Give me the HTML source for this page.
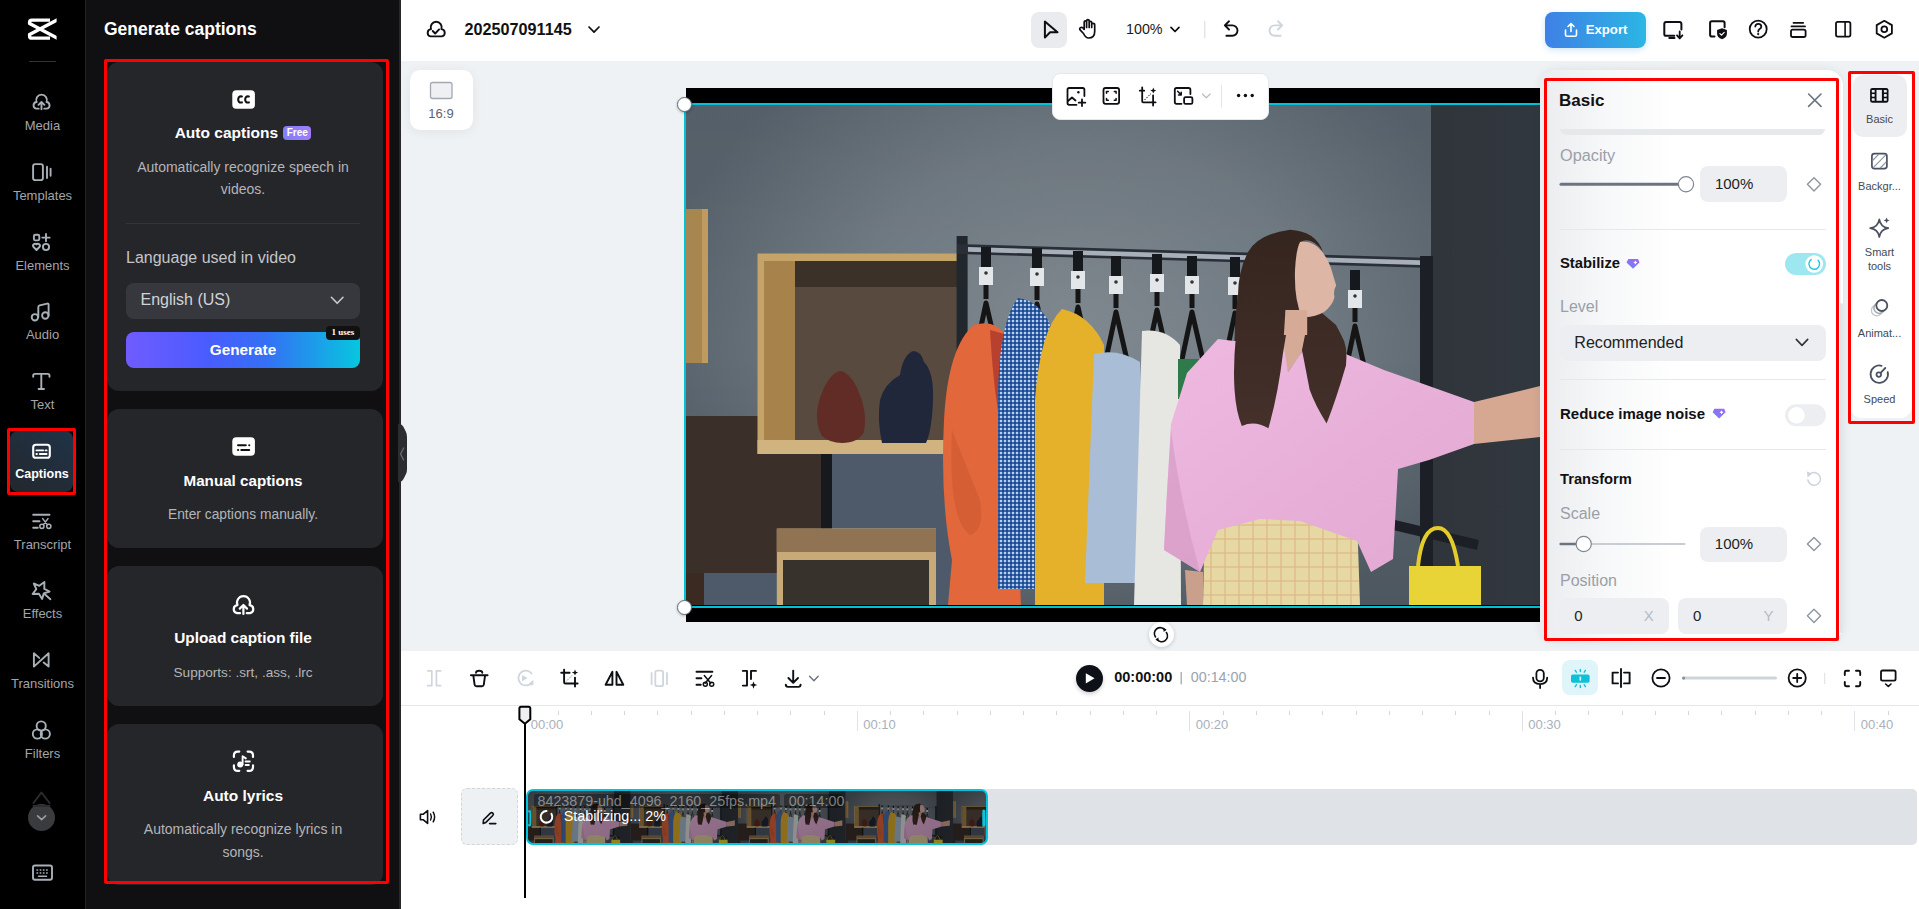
<!DOCTYPE html>
<html><head><meta charset="utf-8"><style>
*{margin:0;padding:0;box-sizing:border-box}
html,body{width:1919px;height:909px;overflow:hidden;background:#fff;font-family:"Liberation Sans", sans-serif}
.t{position:absolute;line-height:1;white-space:nowrap}
svg{display:block}
</style></head><body>
<div style="position:absolute;left:0px;top:0px;width:85px;height:909px;background:#000"></div><div style="position:absolute;left:85px;top:0px;width:1px;height:909px;background:#242424"></div><svg style="position:absolute;left:0;top:0" width="85" height="60" viewBox="0 0 85 60" fill="none"><path d="M50 20.1 H31.8 Q29.6 20.1 29.6 22.3 V23.6 L58 38.6 M50 38.1 H31.8 Q29.6 38.1 29.6 35.9 V34.6 L58 19.6" stroke="#fff" stroke-width="3.4" stroke-linejoin="round"/><rect x="56.6" y="14" width="6" height="30" fill="#000"/></svg><div style="position:absolute;left:29px;top:61px;width:27px;height:1px;background:#333"></div><div class="t" style="left:-257.5px;width:600px;text-align:center;top:119.00px;font-size:13px;color:#a3a5aa;font-weight:400;">Media</div><div class="t" style="left:-257.5px;width:600px;text-align:center;top:189.00px;font-size:13px;color:#a3a5aa;font-weight:400;">Templates</div><div class="t" style="left:-257.5px;width:600px;text-align:center;top:259.00px;font-size:13px;color:#a3a5aa;font-weight:400;">Elements</div><div class="t" style="left:-257.5px;width:600px;text-align:center;top:328.00px;font-size:13px;color:#a3a5aa;font-weight:400;">Audio</div><div class="t" style="left:-257.5px;width:600px;text-align:center;top:398.00px;font-size:13px;color:#a3a5aa;font-weight:400;">Text</div><div class="t" style="left:-257.5px;width:600px;text-align:center;top:538.00px;font-size:13px;color:#a3a5aa;font-weight:400;">Transcript</div><div class="t" style="left:-257.5px;width:600px;text-align:center;top:607.00px;font-size:13px;color:#a3a5aa;font-weight:400;">Effects</div><div class="t" style="left:-257.5px;width:600px;text-align:center;top:677.00px;font-size:13px;color:#a3a5aa;font-weight:400;">Transitions</div><div class="t" style="left:-257.5px;width:600px;text-align:center;top:747.00px;font-size:13px;color:#a3a5aa;font-weight:400;">Filters</div><div style="position:absolute;left:10px;top:431px;width:63px;height:61px;border-radius:8px;background:linear-gradient(35deg,#24272c 0%,#1f3348 100%)"></div><div class="t" style="left:-258px;width:600px;text-align:center;top:468.42px;font-size:12.5px;color:#fff;font-weight:700;">Captions</div><div style="position:absolute;left:7px;top:428px;width:69px;height:67px;border:3px solid #f00;border-radius:2px"></div><div style="position:absolute;left:28px;top:804px;width:27px;height:27px;border-radius:50%;background:#3a3b3e"></div><div style="position:absolute;left:86px;top:0px;width:315px;height:909px;background:#101012"></div><div style="position:absolute;left:399px;top:0px;width:2px;height:909px;background:#28282a"></div><div class="t" style="left:104px;top:21.19px;font-size:17.5px;color:#fff;font-weight:700;">Generate captions</div><div style="position:absolute;left:107px;top:62px;width:276px;height:329px;background:#25262a;border-radius:12px"></div><div style="position:absolute;left:107px;top:409px;width:276px;height:139px;background:#25262a;border-radius:12px"></div><div style="position:absolute;left:107px;top:566px;width:276px;height:140px;background:#25262a;border-radius:12px"></div><div style="position:absolute;left:107px;top:724px;width:276px;height:161px;background:#25262a;border-radius:12px"></div><div class="t" style="left:-57px;width:600px;text-align:center;top:124.88px;font-size:15.5px;color:#fff;font-weight:700;">Auto captions <span style="display:inline-block;vertical-align:2px;margin-left:1px;width:28px;height:14px;text-align:center;background:linear-gradient(60deg,#7d7ff6,#a47cf8);color:#fff;font-size:10px;font-weight:700;border-radius:4px;line-height:14px">Free</span></div><div class="t" style="left:-57px;width:600px;text-align:center;top:160.15px;font-size:14px;color:#b4b5b9;font-weight:400;">Automatically recognize speech in</div><div class="t" style="left:-57px;width:600px;text-align:center;top:182.15px;font-size:14px;color:#b4b5b9;font-weight:400;">videos.</div><div style="position:absolute;left:126px;top:223px;width:234px;height:1px;background:#34353a"></div><div class="t" style="left:126px;top:249.96px;font-size:16px;color:#c4c5c9;font-weight:400;">Language used in video</div><div style="position:absolute;left:126px;top:283px;width:234px;height:36px;background:#37383d;border-radius:8px"></div><div class="t" style="left:140.5px;top:292.46px;font-size:16px;color:#d2d3d7;font-weight:400;">English (US)</div><div style="position:absolute;left:126px;top:332px;width:234px;height:36px;border-radius:8px;background:linear-gradient(90deg,#6f5cff 0%,#4a5cff 35%,#3470f5 60%,#07c6df 100%)"></div><div class="t" style="left:-57px;width:600px;text-align:center;top:341.55px;font-size:15.3px;color:#fff;font-weight:700;">Generate</div><div style="position:absolute;left:326px;top:326px;width:34px;height:14px;background:#111;border-radius:4px"></div><div class="t" style="left:43px;width:600px;text-align:center;top:328.38px;font-size:9px;color:#fff;font-weight:700;font-family:'Liberation Serif',serif;">1 uses</div><div class="t" style="left:-57px;width:600px;text-align:center;top:473.43px;font-size:15.2px;color:#fff;font-weight:700;">Manual captions</div><div class="t" style="left:-57px;width:600px;text-align:center;top:507.72px;font-size:13.8px;color:#b4b5b9;font-weight:400;">Enter captions manually.</div><div class="t" style="left:-57px;width:600px;text-align:center;top:630.16px;font-size:15.4px;color:#fff;font-weight:700;">Upload caption file</div><div class="t" style="left:-57px;width:600px;text-align:center;top:665.79px;font-size:13.6px;color:#b4b5b9;font-weight:400;">Supports: .srt, .ass, .lrc</div><div class="t" style="left:-57px;width:600px;text-align:center;top:787.68px;font-size:15.5px;color:#fff;font-weight:700;">Auto lyrics</div><div class="t" style="left:-57px;width:600px;text-align:center;top:822.15px;font-size:14px;color:#b4b5b9;font-weight:400;">Automatically recognize lyrics in</div><div class="t" style="left:-57px;width:600px;text-align:center;top:844.85px;font-size:14px;color:#b4b5b9;font-weight:400;">songs.</div><div style="position:absolute;left:104px;top:59px;width:285px;height:825px;border:3px solid #f00;border-radius:2px"></div><div style="position:absolute;left:401px;top:0px;width:1518px;height:61px;background:#fff"></div><div class="t" style="left:464.5px;top:21.39px;font-size:16.2px;color:#111;font-weight:700;">202507091145</div><div class="t" style="left:1126px;top:21.70px;font-size:14.3px;color:#1a1a1a;font-weight:400;">100%</div><div style="position:absolute;left:1031px;top:12px;width:36px;height:36px;background:#e9ebee;border-radius:8px"></div><div style="position:absolute;left:1545px;top:12px;width:101px;height:36px;border-radius:8px;background:linear-gradient(90deg,#3f80e6,#2bb6e4);box-shadow:0 2px 6px rgba(60,160,230,.25)"></div><div class="t" style="left:1585.7px;top:22.83px;font-size:13.2px;color:#fff;font-weight:700;">Export</div><div style="position:absolute;left:401px;top:61px;width:1518px;height:590px;background:#eef2f5"></div><div style="position:absolute;left:410px;top:70px;width:63px;height:60px;background:#fff;border-radius:10px;box-shadow:0 2px 12px rgba(0,0,0,.06)"></div><div class="t" style="left:141px;width:600px;text-align:center;top:106.80px;font-size:13px;color:#5c6370;font-weight:400;">16:9</div><div style="position:absolute;left:686px;top:88px;width:880px;height:534px;background:#000"></div><svg style="position:absolute;left:686px;top:105px" width="880" height="500" viewBox="686 105 880 500"><g id="photoG"><defs>
<radialGradient id="wall" gradientUnits="userSpaceOnUse" cx="1080" cy="330" r="420" gradientTransform="translate(1080 330) scale(1 0.8) translate(-1080 -330)"><stop offset="0" stop-color="#808990"/><stop offset="0.55" stop-color="#717b83"/><stop offset="1" stop-color="#58636d"/></radialGradient>
<linearGradient id="wallv" x1="0" y1="0" x2="0" y2="1"><stop offset="0" stop-color="#000" stop-opacity="0.04"/><stop offset="0.5" stop-color="#000" stop-opacity="0"/><stop offset="1" stop-color="#000" stop-opacity="0.12"/></linearGradient>
<linearGradient id="darkwall" x1="0" y1="0" x2="1" y2="0"><stop offset="0" stop-color="#2f353b"/><stop offset="1" stop-color="#32383f"/></linearGradient>
<linearGradient id="pink" x1="0" y1="0" x2="1" y2="1"><stop offset="0" stop-color="#eeb9e0"/><stop offset="1" stop-color="#e2a8d2"/></linearGradient>
<linearGradient id="hair" gradientUnits="userSpaceOnUse" x1="0" y1="230" x2="0" y2="430"><stop offset="0" stop-color="#35251f"/><stop offset="1" stop-color="#45302a"/></linearGradient>
<pattern id="check" width="4" height="4" patternUnits="userSpaceOnUse"><rect width="4" height="4" fill="#3565ad"/><rect width="2" height="2" fill="#b9cfeb"/><rect x="2" y="2" width="2" height="2" fill="#1f4a8e"/></pattern>
<pattern id="plaid" width="14" height="14" patternUnits="userSpaceOnUse"><rect width="14" height="14" fill="#e6d8a2"/><rect x="6" width="2" height="14" fill="#e0b888" opacity=".6"/><rect y="6" width="14" height="2" fill="#e0b888" opacity=".6"/></pattern>
</defs><rect x="686" y="105" width="880" height="500" fill="url(#wall)"/><rect x="1431" y="105" width="140" height="500" fill="url(#darkwall)"/><rect x="686" y="105" width="745" height="500" fill="url(#wallv)"/><rect x="686" y="440" width="270" height="165" fill="#4e5a6a"/><rect x="686" y="209" width="22" height="154" fill="#a8864f"/><rect x="702" y="209" width="6" height="154" fill="#c09a5e"/><rect x="686" y="416" width="135" height="157" fill="#3b2f2a"/><rect x="686" y="573" width="18" height="32" fill="#3a2a22"/><rect x="757.5" y="253.5" width="200.5" height="200.5" fill="#c4a468"/><rect x="764" y="261" width="194" height="181" fill="#584a3e"/><rect x="764" y="261" width="194" height="26" fill="#342a23" opacity=".8"/><rect x="764" y="261" width="31" height="181" fill="#a7824a"/><rect x="757.5" y="440" width="200.5" height="14" fill="#d0b37e"/><path d="M840 371 Q828 374 820 398 Q813 420 822 436 Q830 443 842 443 Q858 443 864 432 Q868 412 858 390 Q850 372 840 371 Z" fill="#612c26"/><path d="M913 351 Q921 351 924 362 Q934 372 933 400 Q932 430 926 443 H882 Q877 420 880 400 Q884 384 900 375 Q903 355 913 351 Z" fill="#20273a"/><rect x="821" y="454" width="11" height="76" fill="#16191d"/><rect x="776.8" y="528.5" width="159.2" height="76.5" fill="#c7aa78"/><rect x="776.8" y="529" width="159.2" height="23" fill="#8f7352"/><rect x="783" y="560" width="146" height="45" fill="#38322d"/><rect x="956.6" y="236" width="11" height="369" fill="#22262d"/><path d="M957 244 L1433 258 L1433 268 L957 254 Z" fill="#2a2f37"/><path d="M968 247 L1420 260.3 L1420 265 L968 251.7 Z" fill="#a7b0ba"/><rect x="1420" y="256" width="13" height="349" fill="#1c2026"/><path d="M1395 520 L1479 540 L1477 550 L1393 530 Z" fill="#1c2026"/><rect x="981" y="247" width="10" height="21" fill="#15181d"/><rect x="979" y="267" width="14" height="18" fill="#e4e7ea"/><circle cx="986" cy="273" r="1.8" fill="#333"/><path d="M986 285 V299 M975 355 L986 303 L997 351" stroke="#151515" stroke-width="5" fill="none" stroke-linejoin="round"/><rect x="1032" y="248" width="10" height="21" fill="#15181d"/><rect x="1030" y="268" width="14" height="18" fill="#e4e7ea"/><circle cx="1037" cy="274" r="1.8" fill="#333"/><path d="M1037 286 V300 M1026 356 L1037 304 L1048 352" stroke="#151515" stroke-width="5" fill="none" stroke-linejoin="round"/><rect x="1073" y="251" width="10" height="21" fill="#15181d"/><rect x="1071" y="271" width="14" height="18" fill="#e4e7ea"/><circle cx="1078" cy="277" r="1.8" fill="#333"/><path d="M1078 289 V303 M1067 359 L1078 307 L1089 355" stroke="#151515" stroke-width="5" fill="none" stroke-linejoin="round"/><rect x="1111" y="256" width="10" height="21" fill="#15181d"/><rect x="1109" y="276" width="14" height="18" fill="#e4e7ea"/><circle cx="1116" cy="282" r="1.8" fill="#333"/><path d="M1116 294 V308 M1105 364 L1116 312 L1127 360" stroke="#151515" stroke-width="5" fill="none" stroke-linejoin="round"/><rect x="1152" y="254" width="10" height="21" fill="#15181d"/><rect x="1150" y="274" width="14" height="18" fill="#e4e7ea"/><circle cx="1157" cy="280" r="1.8" fill="#333"/><path d="M1157 292 V306 M1146 362 L1157 310 L1168 358" stroke="#151515" stroke-width="5" fill="none" stroke-linejoin="round"/><rect x="1187" y="256" width="10" height="21" fill="#15181d"/><rect x="1185" y="276" width="14" height="18" fill="#e4e7ea"/><circle cx="1192" cy="282" r="1.8" fill="#333"/><path d="M1192 294 V308 M1181 364 L1192 312 L1203 360" stroke="#151515" stroke-width="5" fill="none" stroke-linejoin="round"/><rect x="1230" y="257" width="10" height="21" fill="#15181d"/><rect x="1228" y="277" width="14" height="18" fill="#e4e7ea"/><circle cx="1235" cy="283" r="1.8" fill="#333"/><path d="M1235 295 V309 M1224 365 L1235 313 L1246 361" stroke="#151515" stroke-width="5" fill="none" stroke-linejoin="round"/><rect x="1350" y="270" width="10" height="21" fill="#15181d"/><rect x="1348" y="290" width="14" height="18" fill="#e4e7ea"/><circle cx="1355" cy="296" r="1.8" fill="#333"/><path d="M1355 308 V322 M1344 378 L1355 326 L1366 374" stroke="#151515" stroke-width="5" fill="none" stroke-linejoin="round"/><path d="M975 324 Q948 345 944 420 Q940 500 952 560 L948 605 H1021 L1010 340 Q995 318 975 325 Z" fill="#e2673a"/><path d="M952 430 Q948 520 970 535 Q985 530 980 500 Z" fill="#c9552e" opacity=".5"/><path d="M990 330 L1008 335 L1010 460 Q995 420 990 330 Z" fill="#b8402e"/><path d="M1018 298 Q1000 320 998 390 V589 H1052 L1053 330 Q1040 300 1018 298 Z" fill="url(#check)"/><path d="M1062 309 Q1040 330 1035 400 V605 H1104 L1104 345 Q1090 315 1062 309 Z" fill="#e5b12a"/><path d="M1094 354 L1085 583 H1148 L1140 362 Q1118 348 1094 354 Z" fill="#a9bed6"/><path d="M1142 331 L1134 605 H1181 L1180 345 Q1165 328 1142 331 Z" fill="#e6e6e3"/><rect x="1178" y="359" width="36" height="40" fill="#2f7a4a"/><path d="M1290 229.7 Q1258 234 1248 252 Q1238 272 1238 295 Q1233 330 1234.5 389.5 Q1236 412 1241.8 425.9 L1268.4 428.3 Q1278 395 1283 353 L1300 330 L1309.6 389.5 Q1318 410 1326.6 423.4 Q1340 395 1346 365.3 Q1348 345 1336 325 L1322 313 L1302 310 L1300 242 Q1312 236 1323 252 Q1316 231 1290 229.7 Z" fill="url(#hair)"/><path d="M1300 242 Q1313 240 1322 251.5 Q1330 262 1333 275 L1336.2 285.4 Q1333 290 1334.5 297.5 Q1332 306 1324 312 Q1314 318 1302 317 Q1294 300 1295 270 Q1296 250 1300 242 Z" fill="#ddb6a6"/><path d="M1285.4 310 H1307.2 L1307.2 340 L1300 355.6 L1287.8 372 L1283 350 Z" fill="#d5ab98"/><path d="M1205 516 L1357 516 L1360 605 H1203 Z" fill="url(#plaid)"/><path d="M1218 339 L1234 341 L1283 342 L1288 372 L1302 352 L1320 340 L1348 355 L1384 370 L1474 402 L1474 444 L1429 460 L1398 469 L1393 559 L1371 572 L1357 541 L1300 521 L1260 519 L1218 530 L1200 572 L1164 550 L1167 492 L1171 424 L1187 373 Z" fill="url(#pink)"/><path d="M1171 430 Q1180 500 1200 572 L1164 550 L1167 492 Z" fill="#d69bc4" opacity=".7"/><path d="M1236 335 Q1233 365 1234.5 389.5 Q1236 412 1241.8 425.9 Q1255 420 1268.4 428.3 Q1278 395 1283 353 L1286 335 Z" fill="url(#hair)"/><path d="M1341 335 Q1348 345 1346 365.3 Q1336 400 1326.6 423.4 Q1315 405 1309.6 389.5 L1302 350 L1305 335 Z" fill="url(#hair)"/><path d="M1474 402 L1540 386 L1540 437 L1474 444 Z" fill="#d6a892"/><path d="M1185 570 L1203 572 L1203 605 H1187 Z" fill="#c9a08c"/><path d="M1418 566 Q1422 528 1438 528 Q1452 528 1458 566" stroke="#e3cc2c" stroke-width="4" fill="none"/><path d="M1409 566 H1481 V605 H1409 Z" fill="#e8d436"/></g></svg><div style="position:absolute;left:684px;top:103px;width:880px;height:505px;border:2px solid #00c2d6"></div><div style="position:absolute;left:1052px;top:73px;width:217px;height:47px;background:#fff;border-radius:8px;border:1px solid #e4e7eb"></div><div style="position:absolute;left:1148.5px;top:622.2px;width:25px;height:25px;border-radius:50%;background:#fff;box-shadow:0 1px 4px rgba(0,0,0,.18)"></div><div style="position:absolute;left:1540px;top:70px;width:303px;height:572px;background:linear-gradient(90deg,#eaecef 0%,#f7f8f9 22%,#fff 45%);border-radius:16px;box-shadow:0 0 10px rgba(0,0,0,.08)"></div><div style="position:absolute;left:1560px;top:129px;width:265px;height:6px;background:#e6e9ec;border-radius:0 0 8px 8px"></div><div style="position:absolute;left:1840px;top:303px;width:3px;height:330px;background:#e3e6e9;border-radius:2px"></div><div class="t" style="left:1559px;top:91.61px;font-size:17px;color:#111;font-weight:700;">Basic</div><div class="t" style="left:1560px;top:146.70px;font-size:16.3px;color:#9aa0a8;font-weight:400;">Opacity</div><div style="position:absolute;left:1700px;top:166px;width:87px;height:36px;background:#eceef1;border-radius:8px"></div><div class="t" style="left:1714.9px;top:176.10px;font-size:15px;color:#222;font-weight:400;">100%</div><div style="position:absolute;left:1560px;top:229px;width:266px;height:1px;background:#e6e8eb"></div><div class="t" style="left:1560px;top:255.87px;font-size:14.8px;color:#111;font-weight:700;">Stabilize</div><div class="t" style="left:1560px;top:298.86px;font-size:16px;color:#9aa0a8;font-weight:400;">Level</div><div style="position:absolute;left:1560px;top:325px;width:266px;height:36px;background:#eceef1;border-radius:8px"></div><div class="t" style="left:1574.3px;top:334.37px;font-size:16.1px;color:#222;font-weight:400;">Recommended</div><div style="position:absolute;left:1560px;top:379px;width:266px;height:1px;background:#e6e8eb"></div><div class="t" style="left:1560px;top:406.00px;font-size:15px;color:#111;font-weight:700;">Reduce image noise</div><div style="position:absolute;left:1560px;top:449px;width:266px;height:1px;background:#e6e8eb"></div><div class="t" style="left:1560px;top:472.06px;font-size:14.7px;color:#111;font-weight:700;">Transform</div><div class="t" style="left:1560px;top:506.46px;font-size:16px;color:#9aa0a8;font-weight:400;">Scale</div><div style="position:absolute;left:1700px;top:527px;width:87px;height:35px;background:#eceef1;border-radius:8px"></div><div class="t" style="left:1714.8px;top:536.20px;font-size:15px;color:#222;font-weight:400;">100%</div><div class="t" style="left:1560px;top:573.36px;font-size:16px;color:#9aa0a8;font-weight:400;">Position</div><div style="position:absolute;left:1559px;top:598px;width:110px;height:36px;background:#eceef1;border-radius:8px"></div><div style="position:absolute;left:1678px;top:598px;width:109px;height:36px;background:#eceef1;border-radius:8px"></div><div class="t" style="left:1574.3px;top:608.30px;font-size:15px;color:#222;font-weight:400;">0</div><div class="t" style="left:1693px;top:608.30px;font-size:15px;color:#222;font-weight:400;">0</div><div class="t" style="left:1643.7px;top:608.30px;font-size:15px;color:#b6bcc4;font-weight:400;">X</div><div class="t" style="left:1763.5px;top:608.30px;font-size:15px;color:#b6bcc4;font-weight:400;">Y</div><div style="position:absolute;left:1544px;top:78px;width:295px;height:563px;border:3px solid #f00;border-radius:2px"></div><div style="position:absolute;left:1850px;top:71px;width:62px;height:347px;background:#fff;border-radius:12px"></div><div style="position:absolute;left:1853px;top:75px;width:54px;height:62px;background:#eceef1;border-radius:10px"></div><div class="t" style="left:1579.5px;width:600px;text-align:center;top:114.09px;font-size:11px;color:#444a52;font-weight:400;">Basic</div><div class="t" style="left:1579.5px;width:600px;text-align:center;top:181.29px;font-size:11px;color:#444a52;font-weight:400;">Backgr...</div><div class="t" style="left:1579.5px;width:600px;text-align:center;top:246.69px;font-size:11px;color:#444a52;font-weight:400;">Smart</div><div class="t" style="left:1579.5px;width:600px;text-align:center;top:260.99px;font-size:11px;color:#444a52;font-weight:400;">tools</div><div class="t" style="left:1579.5px;width:600px;text-align:center;top:327.69px;font-size:11px;color:#444a52;font-weight:400;">Animat...</div><div class="t" style="left:1579.5px;width:600px;text-align:center;top:394.09px;font-size:11px;color:#444a52;font-weight:400;">Speed</div><div style="position:absolute;left:1848px;top:71px;width:67px;height:353px;border:3px solid #f00;border-radius:2px"></div><div style="position:absolute;left:401px;top:651px;width:1518px;height:54px;background:#fff"></div><div style="position:absolute;left:401px;top:705px;width:1518px;height:1px;background:#e5e8eb"></div><div style="position:absolute;left:1076px;top:665px;width:27px;height:27px;background:#0d1117;border-radius:50%;box-shadow:0 2px 4px rgba(0,0,0,.2)"></div><div class="t" style="left:1114.2px;top:670.03px;font-size:14.5px;color:#111;font-weight:700;">00:00:00</div><div class="t" style="left:1190.8px;top:670.20px;font-size:14.3px;color:#9aa3ad;font-weight:400;">00:14:00</div><div style="position:absolute;left:1562px;top:660px;width:36px;height:35px;background:#dff5f9;border-radius:8px"></div><div style="position:absolute;left:558px;top:711px;width:1px;height:4px;background:#d3d7dc"></div><div style="position:absolute;left:591px;top:711px;width:1px;height:4px;background:#d3d7dc"></div><div style="position:absolute;left:624px;top:711px;width:1px;height:4px;background:#d3d7dc"></div><div style="position:absolute;left:657px;top:711px;width:1px;height:4px;background:#d3d7dc"></div><div style="position:absolute;left:691px;top:711px;width:1px;height:4px;background:#d3d7dc"></div><div style="position:absolute;left:724px;top:711px;width:1px;height:4px;background:#d3d7dc"></div><div style="position:absolute;left:757px;top:711px;width:1px;height:4px;background:#d3d7dc"></div><div style="position:absolute;left:790px;top:711px;width:1px;height:4px;background:#d3d7dc"></div><div style="position:absolute;left:824px;top:711px;width:1px;height:4px;background:#d3d7dc"></div><div style="position:absolute;left:890px;top:711px;width:1px;height:4px;background:#d3d7dc"></div><div style="position:absolute;left:923px;top:711px;width:1px;height:4px;background:#d3d7dc"></div><div style="position:absolute;left:957px;top:711px;width:1px;height:4px;background:#d3d7dc"></div><div style="position:absolute;left:990px;top:711px;width:1px;height:4px;background:#d3d7dc"></div><div style="position:absolute;left:1023px;top:711px;width:1px;height:4px;background:#d3d7dc"></div><div style="position:absolute;left:1056px;top:711px;width:1px;height:4px;background:#d3d7dc"></div><div style="position:absolute;left:1090px;top:711px;width:1px;height:4px;background:#d3d7dc"></div><div style="position:absolute;left:1123px;top:711px;width:1px;height:4px;background:#d3d7dc"></div><div style="position:absolute;left:1156px;top:711px;width:1px;height:4px;background:#d3d7dc"></div><div style="position:absolute;left:1223px;top:711px;width:1px;height:4px;background:#d3d7dc"></div><div style="position:absolute;left:1256px;top:711px;width:1px;height:4px;background:#d3d7dc"></div><div style="position:absolute;left:1289px;top:711px;width:1px;height:4px;background:#d3d7dc"></div><div style="position:absolute;left:1322px;top:711px;width:1px;height:4px;background:#d3d7dc"></div><div style="position:absolute;left:1356px;top:711px;width:1px;height:4px;background:#d3d7dc"></div><div style="position:absolute;left:1389px;top:711px;width:1px;height:4px;background:#d3d7dc"></div><div style="position:absolute;left:1422px;top:711px;width:1px;height:4px;background:#d3d7dc"></div><div style="position:absolute;left:1455px;top:711px;width:1px;height:4px;background:#d3d7dc"></div><div style="position:absolute;left:1489px;top:711px;width:1px;height:4px;background:#d3d7dc"></div><div style="position:absolute;left:1555px;top:711px;width:1px;height:4px;background:#d3d7dc"></div><div style="position:absolute;left:1588px;top:711px;width:1px;height:4px;background:#d3d7dc"></div><div style="position:absolute;left:1622px;top:711px;width:1px;height:4px;background:#d3d7dc"></div><div style="position:absolute;left:1655px;top:711px;width:1px;height:4px;background:#d3d7dc"></div><div style="position:absolute;left:1688px;top:711px;width:1px;height:4px;background:#d3d7dc"></div><div style="position:absolute;left:1721px;top:711px;width:1px;height:4px;background:#d3d7dc"></div><div style="position:absolute;left:1755px;top:711px;width:1px;height:4px;background:#d3d7dc"></div><div style="position:absolute;left:1788px;top:711px;width:1px;height:4px;background:#d3d7dc"></div><div style="position:absolute;left:1821px;top:711px;width:1px;height:4px;background:#d3d7dc"></div><div style="position:absolute;left:1888px;top:711px;width:1px;height:4px;background:#d3d7dc"></div><div class="t" style="left:530.8px;top:717.70px;font-size:13px;color:#a9b0ba;font-weight:400;">00:00</div><div style="position:absolute;left:524px;top:711px;width:1px;height:20px;background:#dfe2e6"></div><div class="t" style="left:863.3px;top:717.70px;font-size:13px;color:#a9b0ba;font-weight:400;">00:10</div><div style="position:absolute;left:857px;top:711px;width:1px;height:20px;background:#dfe2e6"></div><div class="t" style="left:1195.8px;top:717.70px;font-size:13px;color:#a9b0ba;font-weight:400;">00:20</div><div style="position:absolute;left:1189px;top:711px;width:1px;height:20px;background:#dfe2e6"></div><div class="t" style="left:1528.3px;top:717.70px;font-size:13px;color:#a9b0ba;font-weight:400;">00:30</div><div style="position:absolute;left:1522px;top:711px;width:1px;height:20px;background:#dfe2e6"></div><div class="t" style="left:1860.8px;top:717.70px;font-size:13px;color:#a9b0ba;font-weight:400;">00:40</div><div style="position:absolute;left:1854px;top:711px;width:1px;height:20px;background:#dfe2e6"></div><div style="position:absolute;left:960px;top:789px;width:957px;height:56px;background:#dfe2e6;border-radius:0 5px 5px 0"></div><svg style="position:absolute;left:527px;top:790px" width="460" height="54" viewBox="0 0 460 54"><defs><clipPath id="clipc"><rect width="460" height="54" rx="6"/></clipPath></defs><g clip-path="url(#clipc)"><g transform="translate(-4.0,0) scale(0.1222,0.108)"><use href="#photoG" transform="translate(-686,-105)"/></g><g transform="translate(103.5,0) scale(0.1222,0.108)"><use href="#photoG" transform="translate(-686,-105)"/></g><g transform="translate(211.0,0) scale(0.1222,0.108)"><use href="#photoG" transform="translate(-686,-105)"/></g><g transform="translate(318.5,0) scale(0.1222,0.108)"><use href="#photoG" transform="translate(-686,-105)"/></g><g transform="translate(426.0,0) scale(0.1222,0.108)"><use href="#photoG" transform="translate(-686,-105)"/></g><rect width="460" height="54" fill="#000" opacity=".38"/></g></svg><div style="position:absolute;left:526px;top:789px;width:462px;height:56px;border:2px solid #00c4dc;border-radius:7px"></div><div style="position:absolute;left:534px;top:794px;width:246px;height:14px;background:rgba(0,0,0,.35);border-radius:3px"></div><div style="position:absolute;left:784px;top:794px;width:58px;height:14px;background:rgba(0,0,0,.35);border-radius:3px"></div><div class="t" style="left:537.5px;top:793.60px;font-size:14.3px;color:rgba(255,255,255,.45);font-weight:400;">8423879-uhd_4096_2160_25fps.mp4</div><div class="t" style="left:788.7px;top:793.60px;font-size:14.3px;color:rgba(255,255,255,.45);font-weight:400;">00:14:00</div><div class="t" style="left:563.7px;top:808.91px;font-size:14.4px;color:#fff;font-weight:400;">Stabilizing... 2%</div><div style="position:absolute;left:461px;top:788px;width:57px;height:57px;background:#eef1f4;border:1px dashed #d2d6dc;border-radius:6px"></div><div style="position:absolute;left:524px;top:724px;width:2px;height:174px;background:#000"></div><svg style="position:absolute;left:395px;top:420px" width="16" height="66" viewBox="395 420 16 66"><path d="M398 424 H399.5 Q402 424 404 428 L406 432 Q407 434 407 437 V469 Q407 472 406 474 L404 478 Q402 482 399.5 482 H398 Z" fill="#2c2d30"/><path d="M403.6 448 L400.6 454 L403.6 460" stroke="#6a6b6e" stroke-width="1.3" fill="none" stroke-linecap="round"/></svg><svg style="position:absolute;left:0;top:0;pointer-events:none" width="1919" height="909" viewBox="0 0 1919 909" fill="none"><defs><linearGradient id="gemg" x1="1" y1="0" x2="0.3" y2="1"><stop offset="0" stop-color="#a464f7"/><stop offset="1" stop-color="#6f82f8"/></linearGradient></defs><g transform="translate(31.55,93.3) scale(0.82)"><path d="M8.7 18.7 H5.7 A4.1 4.1 0 0 1 6.2 10.6 A6.5 6.5 0 1 1 18.2 10.6 A4.1 4.1 0 0 1 18.7 18.7 H15.5" stroke="#a8b0b8" stroke-width="2.317073170731707" stroke-linecap="round" stroke-linejoin="round" fill="none"/><path d="M12.1 19.5 V10.5 M8.5 14.1 L12.1 10.5 L15.7 14.1" stroke="#a8b0b8" stroke-width="2.317073170731707" stroke-linecap="round" stroke-linejoin="round" fill="none"/></g><rect x="33.1" y="164.1" width="9.8" height="16" rx="2.2" stroke="#a8b0b8" stroke-width="1.9" stroke-linecap="round" stroke-linejoin="round" fill="none"/><path d="M47 166.8 L47 178 M50.6 168.7 V175.8" stroke="#a8b0b8" stroke-width="1.9" stroke-linecap="round" stroke-linejoin="round" fill="none"/><rect x="33.9" y="234.8" width="5.4" height="5.6" rx="1.5" stroke="#a8b0b8" stroke-width="1.9" stroke-linecap="round" stroke-linejoin="round" fill="none"/><path d="M42.3 237.6 H49.7 M46 233.9 V241.3" stroke="#a8b0b8" stroke-width="1.9" stroke-linecap="round" stroke-linejoin="round" fill="none"/><path d="M36.5 250 L33.6 247 A1.9 1.9 0 0 1 36.5 244.4 A1.9 1.9 0 0 1 39.4 247 Z" stroke="#a8b0b8" stroke-width="1.9" stroke-linecap="round" stroke-linejoin="round" fill="none"/><circle cx="46" cy="247" r="3.1" stroke="#a8b0b8" stroke-width="1.9" stroke-linecap="round" stroke-linejoin="round" fill="none"/><circle cx="34.9" cy="317.3" r="3.2" stroke="#a8b0b8" stroke-width="1.9" stroke-linecap="round" stroke-linejoin="round" fill="none"/><circle cx="45.3" cy="315.5" r="3.2" stroke="#a8b0b8" stroke-width="1.9" stroke-linecap="round" stroke-linejoin="round" fill="none"/><path d="M38.3 317 V307.2 Q38.3 305.8 39.6 305.4 L47.3 303.6 Q48.6 303.4 48.6 304.8 V315.5" stroke="#a8b0b8" stroke-width="1.9" stroke-linecap="round" stroke-linejoin="round" fill="none"/><path d="M33.2 376.8 V375.5 Q33.2 373.9 35 373.9 H47.7 Q49.5 373.9 49.5 375.5 V376.8 M41.3 374 V389 M38.6 389 H44" stroke="#a8b0b8" stroke-width="1.9" stroke-linecap="round" stroke-linejoin="round" fill="none"/><rect x="33.2" y="444.8" width="16.6" height="13" rx="2.6" stroke="#fff" stroke-width="2.1" stroke-linecap="round" stroke-linejoin="round" fill="none"/><path d="M36.4 450.4 H43.3 M45.6 450.4 H46.6 M36.4 454 H37 M39.8 454 H46.6" stroke="#fff" stroke-width="1.8" stroke-linecap="round" stroke-linejoin="round" fill="none"/><path d="M33.2 514.7 H49.5 M33.2 521.2 H39.5 M33.2 527.8 H37.8" stroke="#a8b0b8" stroke-width="1.9" stroke-linecap="round" stroke-linejoin="round" fill="none"/><path d="M42.7 518.6 L47.3 524.6 M48 518.6 L43.4 524.6" stroke="#a8b0b8" stroke-width="1.5" stroke-linecap="round" stroke-linejoin="round" fill="none"/><circle cx="41.9" cy="526.3" r="2.1" stroke="#a8b0b8" stroke-width="1.5" stroke-linecap="round" stroke-linejoin="round" fill="none"/><circle cx="48.8" cy="526.3" r="2.1" stroke="#a8b0b8" stroke-width="1.5" stroke-linecap="round" stroke-linejoin="round" fill="none"/><path d="M33.8 583.5 L39.3 585.8 L44.4 581.9 L44.3 588.9 L49.6 591.5 L43.8 593.4 L42.1 599 L38.9 593.8 L32.6 594 L36.3 589.2 Z" stroke="#a8b0b8" stroke-width="1.9" stroke-linecap="round" stroke-linejoin="round" fill="none"/><path d="M44.2 593.7 L50.4 599.2" stroke="#a8b0b8" stroke-width="1.9" stroke-linecap="round" stroke-linejoin="round" fill="none"/><path d="M39.2 657.9 L33.9 653.3 V666.6 L48.6 653.3 V666.6 L43.7 662.6" stroke="#a8b0b8" stroke-width="1.9" stroke-linecap="round" stroke-linejoin="round" fill="none"/><circle cx="41.2" cy="726" r="4.6" stroke="#a8b0b8" stroke-width="1.9" stroke-linecap="round" stroke-linejoin="round" fill="none"/><circle cx="37.4" cy="734" r="4.6" stroke="#a8b0b8" stroke-width="1.9" stroke-linecap="round" stroke-linejoin="round" fill="none"/><circle cx="45.3" cy="734" r="4.6" stroke="#a8b0b8" stroke-width="1.9" stroke-linecap="round" stroke-linejoin="round" fill="none"/><path d="M33.5 803 L41.5 792.5 L49.5 803 M33.5 806 H49.5" stroke="#2c2d30" stroke-width="1.9" stroke-linecap="round" stroke-linejoin="round" fill="none"/><path d="M37.6 815.8 L41.6 819.6 L45.6 815.8" stroke="#9a9ca0" stroke-width="1.6" stroke-linecap="round" stroke-linejoin="round" fill="none"/><rect x="33" y="865.5" width="19" height="14.2" rx="2" stroke="#a8b0b8" stroke-width="1.9" stroke-linecap="round" stroke-linejoin="round" fill="none"/><path d="M37 870 H37.6 M40.2 870 H40.8 M43.4 870 H44 M46.6 870 H47.2 M37 873 H37.6 M40.2 873 H40.8 M43.4 873 H44 M46.6 873 H47.2 M38.5 876.3 H46.5" stroke="#a8b0b8" stroke-width="1.5" stroke-linecap="round" stroke-linejoin="round" fill="none"/><rect x="232.3" y="90.2" width="22.6" height="18.5" rx="4" fill="#fff"/><path d="M241.9 96.5 C239.3 95.8 238.2 97.6 238.2 99.45 C238.2 101.3 239.3 103.1 241.9 102.4 M248.9 96.5 C246.3 95.8 245.2 97.6 245.2 99.45 C245.2 101.3 246.3 103.1 248.9 102.4" stroke="#111" stroke-width="2.1" fill="none" stroke-linecap="round"/><rect x="232.3" y="437.2" width="22.6" height="18.5" rx="4" fill="#fff"/><path d="M238 445.2 H245.8 M249.2 445.2 H249.3 M238 449.9 H238.2 M241.3 449.9 H249.2" stroke="#111" stroke-width="2" stroke-linecap="round" fill="none"/><g transform="translate(231.3,594.5) scale(1.0)"><path d="M8.7 18.7 H5.7 A4.1 4.1 0 0 1 6.2 10.6 A6.5 6.5 0 1 1 18.2 10.6 A4.1 4.1 0 0 1 18.7 18.7 H15.5" stroke="#fff" stroke-width="2.2" stroke-linecap="round" stroke-linejoin="round" fill="none"/><path d="M12.1 19.5 V10.5 M8.5 14.1 L12.1 10.5 L15.7 14.1" stroke="#fff" stroke-width="2.2" stroke-linecap="round" stroke-linejoin="round" fill="none"/></g><path d="M233.9 757 V755.5 Q233.9 751.6 237.8 751.6 H239.3 M247.6 751.6 H249.1 Q253 751.6 253 755.5 V757 M253 765.4 V766.9 Q253 770.8 249.1 770.8 H247.6 M239.3 770.8 H237.8 Q233.9 770.8 233.9 766.9 V765.4" stroke="#fff" stroke-width="2.2" stroke-linecap="round" stroke-linejoin="round" fill="none"/><circle cx="240.2" cy="764.6" r="3" fill="#fff"/><path d="M242.6 764.6 V756.2 L245.8 758.4" stroke="#fff" stroke-width="1.9" stroke-linecap="round" stroke-linejoin="round" fill="none"/><path d="M245.6 761.5 H249.8 M245.6 765 H248.8" stroke="#fff" stroke-width="1.9" stroke-linecap="round" stroke-linejoin="round" fill="none"/><path d="M430.6 36.4 A3.7 3.7 0 0 1 431 29.1 A5.5 5.5 0 1 1 441.4 29.1 A3.7 3.7 0 0 1 441.8 36.4 Z" stroke="#0d0f14" stroke-width="1.9" stroke-linecap="round" stroke-linejoin="round" fill="none"/><path d="M432.7 31 L435.2 33.5 L439.1 29.4" stroke="#0d0f14" stroke-width="1.9" stroke-linecap="round" stroke-linejoin="round" fill="none"/><path d="M595.2 27.5 L593.5 29.2" stroke="none"/><path d="M589 27 L594 32.2 L599 27" stroke="#0d0f14" stroke-width="1.7" stroke-linecap="round" stroke-linejoin="round" fill="none"/><rect x="430.5" y="82.5" width="21.5" height="16" rx="2" fill="#eef0f3" stroke="#a3a9b2" stroke-width="1.3"/><path d="M1044.9 21.6 V37.6 L1050.1 32.3 H1057.5 Z" stroke="#0d0f14" stroke-width="2" stroke-linecap="round" stroke-linejoin="round" fill="none"/><path d="M1083.5 33.5 L1080.3 30.2 Q1079 28.6 1080.5 27.6 Q1081.8 26.8 1083 28 L1084.2 29.4 V22 Q1084.2 20.8 1085.4 20.8 Q1086.6 20.8 1086.6 22 V27.5 M1086.6 23.5 V20.9 Q1086.6 19.7 1087.9 19.7 Q1089.2 19.7 1089.2 20.9 V27.5 M1089.2 22.6 Q1089.2 21.4 1090.4 21.4 Q1091.7 21.4 1091.7 22.6 V27.5 M1091.7 24.6 Q1091.7 23.4 1093 23.4 Q1094.7 23.4 1094.7 25 V31.5 Q1094.7 38 1088.6 38 Q1085.6 38 1083.5 33.5" stroke="#0d0f14" stroke-width="1.7" stroke-linecap="round" stroke-linejoin="round" fill="none"/><path d="M1171 27.3 L1175 31.5 L1179 27.3" stroke="#0d0f14" stroke-width="1.7" stroke-linecap="round" stroke-linejoin="round" fill="none"/><rect x="1204.2" y="21" width="1.2" height="17.5" fill="#dde0e4"/><path d="M1229 21.3 L1224.8 25.4 L1229 29.5 M1225.2 25.4 H1232.3 A5.2 5.2 0 0 1 1232.3 35.8 H1226.4" stroke="#0d0f14" stroke-width="1.9" stroke-linecap="round" stroke-linejoin="round" fill="none"/><path d="M1278 21.3 L1282.2 25.4 L1278 29.5 M1281.8 25.4 H1274.7 A5.2 5.2 0 0 0 1274.7 35.8 H1280.6" stroke="#cfd5dd" stroke-width="1.9" stroke-linecap="round" stroke-linejoin="round" fill="none"/><path d="M1565.5 30 V34.8 Q1565.5 36.3 1567 36.3 H1575 Q1576.5 36.3 1576.5 34.8 V30 M1571 31.5 V23.6 M1568 26.5 L1571 23.5 L1574 26.5" stroke="#fff" stroke-width="1.6" stroke-linecap="round" stroke-linejoin="round" fill="none"/><path d="M1681.4 29.6 V24 Q1681.4 22.1 1679.5 22.1 H1666.2 Q1664.3 22.1 1664.3 24 V33.9 Q1664.3 35.8 1666.2 35.8 H1674.3 M1669.3 38 H1674.5" stroke="#0d0f14" stroke-width="2" stroke-linecap="round" stroke-linejoin="round" fill="none"/><path d="M1679.7 31.5 V38.4 M1677 35.3 L1679.7 38.3 L1682.4 35.3" stroke="#0d0f14" stroke-width="1.8" stroke-linecap="round" stroke-linejoin="round" fill="none"/><path d="M1724.6 27.3 V23 Q1724.6 21.2 1722.8 21.2 H1711.9 Q1710.1 21.2 1710.1 23 V34.7 Q1710.1 36.5 1711.9 36.5 H1714.5" stroke="#0d0f14" stroke-width="2" stroke-linecap="round" stroke-linejoin="round" fill="none"/><path d="M1722 28.3 L1726.9 30 V33.8 Q1726.9 37.4 1722 39.2 Q1717.1 37.4 1717.1 33.8 V30 Z" fill="#0d0f14"/><path d="M1719.9 33.6 L1721.5 35.2 L1724.2 32.4" stroke="#fff" stroke-width="1.2" fill="none" stroke-linecap="round" stroke-linejoin="round"/><circle cx="1758.2" cy="29.1" r="8.5" stroke="#0d0f14" stroke-width="1.8" stroke-linecap="round" stroke-linejoin="round" fill="none"/><path d="M1755.3 26.5 Q1755.5 23.8 1758.3 23.8 Q1761.3 23.8 1761.3 26.4 Q1761.3 28 1759.6 29 Q1758.2 29.9 1758.2 31.5" stroke="#0d0f14" stroke-width="1.8" stroke-linecap="round" stroke-linejoin="round" fill="none"/><circle cx="1758.2" cy="34.1" r="1.1" fill="#0d0f14"/><path d="M1793.5 22.8 H1803.2 M1791.5 26.4 H1805 " stroke="#0d0f14" stroke-width="1.8" stroke-linecap="round" stroke-linejoin="round" fill="none"/><rect x="1791" y="29.6" width="14.6" height="7.4" rx="1.8" stroke="#0d0f14" stroke-width="1.8" stroke-linecap="round" stroke-linejoin="round" fill="none"/><rect x="1836" y="21.8" width="14.4" height="14.8" rx="1.8" stroke="#0d0f14" stroke-width="1.8" stroke-linecap="round" stroke-linejoin="round" fill="none"/><path d="M1845.1 22 V36.4" stroke="#0d0f14" stroke-width="1.6" stroke-linecap="round" stroke-linejoin="round" fill="none"/><path d="M1884.3 20.8 L1891.9 25.1 V33.4 L1884.3 37.7 L1876.7 33.4 V25.1 Z" stroke="#0d0f14" stroke-width="1.8" stroke-linecap="round" stroke-linejoin="round" fill="none"/><circle cx="1884.3" cy="29.2" r="2.9" stroke="#0d0f14" stroke-width="1.8" stroke-linecap="round" stroke-linejoin="round" fill="none"/><path d="M1076.5 104.8 H1069.2 Q1067.5 104.8 1067.5 103.1 V89.7 Q1067.5 88 1069.2 88 H1082.7 Q1084.4 88 1084.4 89.7 V96" stroke="#0d0f14" stroke-width="1.8" stroke-linecap="round" stroke-linejoin="round" fill="none"/><path d="M1068 101 L1072 97.5 L1075.5 100.5" stroke="#0d0f14" stroke-width="1.8" stroke-linecap="round" stroke-linejoin="round" fill="none"/><circle cx="1078.4" cy="92.2" r="1.2" fill="#0d0f14"/><path d="M1082 99.4 V106 M1078.7 102.7 H1085.3" stroke="#0d0f14" stroke-width="1.8" stroke-linecap="round" stroke-linejoin="round" fill="none"/><rect x="1103.5" y="88" width="15.6" height="15.8" rx="2" stroke="#0d0f14" stroke-width="1.8" stroke-linecap="round" stroke-linejoin="round" fill="none"/><path d="M1106.5 93.3 V91.5 H1108.3 M1114.3 91.5 H1116.1 V93.3 M1116.1 98.5 V100.3 H1114.3 M1108.3 100.3 H1106.5 V98.5" stroke="#0d0f14" stroke-width="1.5" stroke-linecap="round" stroke-linejoin="round" fill="none"/><path d="M1139.8 90.7 H1144.2 M1142.2 87.5 V101.2 Q1142.2 102.3 1143.3 102.3 H1155.6 M1153.1 95.3 V105.6" stroke="#0d0f14" stroke-width="1.8" stroke-linecap="round" stroke-linejoin="round" fill="none"/><path d="M1144.5 100 L1151 93.5" stroke="#0d0f14" stroke-width="1" stroke-dasharray="1.5 1.2"/><path d="M1153.3 87.6 L1154.2 89.8 L1156.3 90.6 L1154.2 91.4 L1153.3 93.6 L1152.4 91.4 L1150.3 90.6 L1152.4 89.8 Z" fill="#0d0f14"/><path d="M1181.5 103.8 H1176.6 Q1174.8 103.8 1174.8 102 V89.7 Q1174.8 88 1176.6 88 H1188.6 Q1190.4 88 1190.4 89.7 V94" stroke="#0d0f14" stroke-width="1.8" stroke-linecap="round" stroke-linejoin="round" fill="none"/><path d="M1177.6 91.3 L1181.2 94.9 M1181.2 92.2 V94.9 H1178.5" stroke="#0d0f14" stroke-width="1.5" stroke-linecap="round" stroke-linejoin="round" fill="none"/><rect x="1184.1" y="97.2" width="8.3" height="6.7" rx="1.5" stroke="#0d0f14" stroke-width="1.8" stroke-linecap="round" stroke-linejoin="round" fill="none"/><path d="M1202.5 94 L1206.3 97.8 L1210.1 94" stroke="#b9bfc7" stroke-width="1.3" stroke-linecap="round" stroke-linejoin="round" fill="none"/><rect x="1221" y="85" width="1" height="22.5" fill="#e3e6ea"/><circle cx="1238.6" cy="95.5" r="1.7" fill="#0d0f14"/><circle cx="1245.4" cy="95.5" r="1.7" fill="#0d0f14"/><circle cx="1252.2" cy="95.5" r="1.7" fill="#0d0f14"/><path d="M1808.6 94 L1821 106.4 M1821 94 L1808.6 106.4" stroke="#6b7480" stroke-width="1.6" stroke-linecap="round" stroke-linejoin="round" fill="none"/><path d="M1814 177.70000000000002 L1820.6 184.3 L1814 190.9 L1807.4 184.3 Z" stroke="#8f969e" stroke-width="1.4" stroke-linecap="round" stroke-linejoin="round" fill="none"/><path d="M1814 537.4 L1820.6 544 L1814 550.6 L1807.4 544 Z" stroke="#8f969e" stroke-width="1.4" stroke-linecap="round" stroke-linejoin="round" fill="none"/><path d="M1814 609.1999999999999 L1820.6 615.8 L1814 622.4 L1807.4 615.8 Z" stroke="#8f969e" stroke-width="1.4" stroke-linecap="round" stroke-linejoin="round" fill="none"/><path d="M1628.3 259 H1638.1 L1639.5 262.4 L1633.0 268.8 L1626.5 262.4 Z" fill="url(#gemg)"/><path d="M1635.4 260.4 Q1635.8 262 1637.4 262.4 Q1635.8 262.8 1635.4 264.4 Q1635.0 262.8 1633.4 262.4 Q1635.0 262 1635.4 260.4 Z" fill="#fff"/><path d="M1714.3999999999999 408.8 H1724.1999999999998 L1725.6 412.2 L1719.1 418.6 L1712.6 412.2 Z" fill="url(#gemg)"/><path d="M1721.5 410.2 Q1721.8999999999999 411.8 1723.5 412.2 Q1721.8999999999999 412.6 1721.5 414.2 Q1721.1 412.6 1719.5 412.2 Q1721.1 411.8 1721.5 410.2 Z" fill="#fff"/><rect x="1559.5" y="182.8" width="126" height="3" rx="1.5" fill="#6b7580"/><circle cx="1686" cy="184.3" r="7.6" fill="#fff" stroke="#7d8690" stroke-width="1.2"/><rect x="1559.5" y="543" width="126" height="2" rx="1" fill="#c8cdd3"/><rect x="1559.5" y="542.8" width="24" height="2.4" rx="1" fill="#6b7580"/><circle cx="1583.7" cy="544" r="7.6" fill="#fff" stroke="#7d8690" stroke-width="1.2"/><rect x="1785" y="253" width="41" height="22" rx="11" fill="#9de8f0"/><circle cx="1814.2" cy="264" r="8.8" fill="#fff"/><path d="M1811.2 259.6 A5.3 5.3 0 1 0 1818 260.2" stroke="#1cc8e0" stroke-width="1.4" fill="none" stroke-linecap="round"/><rect x="1785" y="404.3" width="41" height="22" rx="11" fill="#eceef1"/><circle cx="1796.5" cy="415.3" r="8.8" fill="#fff" stroke="#e6e8eb" stroke-width="0.8"/><path d="M1796.3 339.4 L1802 345.4 L1807.7 339.4" stroke="#333" stroke-width="1.6" stroke-linecap="round" stroke-linejoin="round" fill="none"/><path d="M1807.9 480 A6.3 6.3 0 1 0 1810.4 473.8" stroke="#ccd3db" stroke-width="1.5" stroke-linecap="round" stroke-linejoin="round" fill="none"/><path d="M1806.9 471.6 L1812 473.4 L1807.6 477.6 Z" fill="#ccd3db"/><path d="M331.4 297.3 L337.2 303.3 L343 297.3" stroke="#c9cacf" stroke-width="1.6" stroke-linecap="round" stroke-linejoin="round" fill="none"/><rect x="1870.1" y="87.9" width="18.4" height="14.9" rx="2.4" fill="#0d0f14"/><rect x="1876.5" y="89.9" width="5.4" height="10.9" fill="#eceef1"/><rect x="1871.8" y="90" width="2.9" height="2.6" rx=".6" fill="#eceef1"/><rect x="1883.9" y="90" width="2.9" height="2.6" rx=".6" fill="#eceef1"/><rect x="1871.8" y="94.1" width="2.9" height="2.6" rx=".6" fill="#eceef1"/><rect x="1883.9" y="94.1" width="2.9" height="2.6" rx=".6" fill="#eceef1"/><rect x="1871.8" y="98.2" width="2.9" height="2.6" rx=".6" fill="#eceef1"/><rect x="1883.9" y="98.2" width="2.9" height="2.6" rx=".6" fill="#eceef1"/><rect x="1871.9" y="153.6" width="15" height="15.1" rx="2.6" stroke="#4a5160" stroke-width="1.7" stroke-linecap="round" stroke-linejoin="round" fill="none"/><path d="M1872.6 160.5 L1878.9 154.2 M1873 167.8 L1886.1 154.7 M1880.2 168 L1886.3 161.9" stroke="#8a909a" stroke-width="1.1"/><path d="M1879.3 219.3 Q1880.5 227 1888.3 228.2 Q1880.5 229.4 1879.3 237 Q1878.1 229.4 1870.2 228.2 Q1878.1 227 1879.3 219.3 Z" stroke="#4a5160" stroke-width="1.7" stroke-linecap="round" stroke-linejoin="round" fill="none"/><path d="M1886.6 217.5 L1887.5 219.6 L1889.6 220.4 L1887.5 221.2 L1886.6 223.3 L1885.7 221.2 L1883.6 220.4 L1885.7 219.6 Z" fill="#4a5160"/><circle cx="1876.8" cy="310.4" r="5.4" stroke="#c5c9cf" stroke-width="1.4" fill="none"/><circle cx="1879.3" cy="308" r="5.4" stroke="#a2a8b0" stroke-width="1.5" fill="none"/><circle cx="1881.8" cy="305.5" r="5.5" fill="#fbfbfc" stroke="#4a5160" stroke-width="1.8" stroke-linecap="round" stroke-linejoin="round" fill="none"/><path d="M1881.6 365.8 A8.7 8.7 0 1 0 1887.7 372" stroke="#4a5160" stroke-width="1.8" stroke-linecap="round" stroke-linejoin="round" fill="none"/><circle cx="1878.8" cy="374.6" r="2.3" stroke="#4a5160" stroke-width="1.7" stroke-linecap="round" stroke-linejoin="round" fill="none"/><path d="M1880.6 372.8 L1885.3 368" stroke="#4a5160" stroke-width="1.8" stroke-linecap="round" stroke-linejoin="round" fill="none"/><path d="M1155.5 637 A5.6 5.6 0 0 1 1165 630" stroke="#0d0f14" stroke-width="1.6" stroke-linecap="round" stroke-linejoin="round" fill="none"/><path d="M1166.4 632.5 A5.6 5.6 0 0 1 1157 639.4" stroke="#0d0f14" stroke-width="1.6" stroke-linecap="round" stroke-linejoin="round" fill="none"/><path d="M1163.2 627.8 L1166.6 629.6 L1163.7 632 Z M1158.8 641.6 L1155.4 639.8 L1158.4 637.4 Z" fill="#0d0f14"/><path d="M427.8 670.8 H431.8 V685.6 H427.8 M440.7 670.8 H436.4 V685.6 H440.7" stroke="#cfd6de" stroke-width="1.7" stroke-linecap="round" stroke-linejoin="round" fill="none"/><path d="M470.9 675.2 H487.6 M476 672.8 Q476 670.8 479.2 670.8 Q482.3 670.8 482.3 672.8 M473.4 676 L474.6 684.6 Q474.9 686.3 476.6 686.3 H481.8 Q483.5 686.3 483.8 684.6 L485 676" stroke="#0d0f14" stroke-width="1.9" stroke-linecap="round" stroke-linejoin="round" fill="none"/><path d="M531.3 683 A7.4 7.4 0 1 1 531.6 673.5" stroke="#cfd6de" stroke-width="1.8" stroke-linecap="round" stroke-linejoin="round" fill="none"/><path d="M522 675 L527.6 678.1 L522 681.2 Z" fill="#cfd6de"/><path d="M529 684.6 L532.8 684.6 L532.8 680.8 Z" fill="#cfd6de" stroke="#cfd6de" stroke-width="1.2" stroke-linejoin="round"/><path d="M561.2 672.8 H569.6 M564.1 669.6 V682.2 Q564.1 683.5 565.4 683.5 H577.6 M575 677.6 V686.6" stroke="#0d0f14" stroke-width="1.9" stroke-linecap="round" stroke-linejoin="round" fill="none"/><path d="M566 681.5 L572.5 675" stroke="#777" stroke-width=".9" stroke-dasharray="1.3 1.1"/><path d="M575 669.6 L575.9 671.8 L578.1 672.6 L575.9 673.4 L575 675.6 L574.1 673.4 L571.9 672.6 L574.1 671.8 Z" fill="#0d0f14"/><path d="M612.4 671.8 V684.8 H605.6 Z M616.5 671.8 V684.8 H623.3 Z" stroke="#0d0f14" stroke-width="1.9" stroke-linecap="round" stroke-linejoin="round" fill="none"/><rect x="655.3" y="670.6" width="7.8" height="15.6" rx="2" stroke="#cfd6de" stroke-width="1.8" stroke-linecap="round" stroke-linejoin="round" fill="none"/><path d="M651.6 672.8 V684.2 M667 672.8 V684.2" stroke="#cfd6de" stroke-width="1.8" stroke-linecap="round" stroke-linejoin="round" fill="none"/><path d="M696.5 671.7 H712.4 M696.5 678.2 H701.4 M696.5 684.8 H700.8" stroke="#0d0f14" stroke-width="1.9" stroke-linecap="round" stroke-linejoin="round" fill="none"/><path d="M704.3 675.6 L710.8 683.2 M711.6 675.6 L705.1 683.2" stroke="#0d0f14" stroke-width="1.5" stroke-linecap="round"/><circle cx="705.3" cy="684.3" r="2" stroke="#0d0f14" stroke-width="1.5" stroke-linecap="round" stroke-linejoin="round" fill="none"/><circle cx="711.7" cy="684.3" r="2" stroke="#0d0f14" stroke-width="1.5" stroke-linecap="round" stroke-linejoin="round" fill="none"/><path d="M742.8 670.9 H747 V685.6 H742.8 M756 670.9 H751 V679" stroke="#0d0f14" stroke-width="1.9" stroke-linecap="round" stroke-linejoin="round" fill="none"/><path d="M753.5 681.4 L754.5 684.1 L757.2 685.1 L754.5 686.1 L753.5 688.8 L752.5 686.1 L749.8 685.1 L752.5 684.1 Z" fill="#0d0f14"/><path d="M793.2 670.6 V682.6 M788.4 678 L793.2 682.8 L798 678 M785.8 684.6 Q785.8 686.9 788 686.9 H798.4 Q800.6 686.9 800.6 684.6" stroke="#0d0f14" stroke-width="1.9" stroke-linecap="round" stroke-linejoin="round" fill="none"/><path d="M809.6 676.2 L813.9 680.8 L818.2 676.2" stroke="#6a7380" stroke-width="1.4" stroke-linecap="round" stroke-linejoin="round" fill="none"/><path d="M1085.8 673.2 L1094.6 678.3 L1085.8 683.4 Z" fill="#fff"/><rect x="1180.6" y="672" width="1.2" height="12.4" fill="#9aa3ad"/><rect x="1536.4" y="669.8" width="7.4" height="11.6" rx="3.7" stroke="#0d0f14" stroke-width="1.8" stroke-linecap="round" stroke-linejoin="round" fill="none"/><path d="M1533 677.6 Q1533 684.2 1540.1 684.2 Q1547.2 684.2 1547.2 677.6 M1540.1 684.4 V688" stroke="#0d0f14" stroke-width="1.8" stroke-linecap="round" stroke-linejoin="round" fill="none"/><rect x="1571" y="674.5" width="18.6" height="8.3" rx="1.8" fill="#0ec0d8"/><rect x="1579.5" y="676.6" width="1.6" height="4" fill="#dff5f9"/><path d="M1580.3 669.4 V671.6 M1575.2 670.4 L1576.4 672.2 M1585.4 670.4 L1584.2 672.2 M1580.3 685.4 V687.6 M1575.2 686.6 L1576.4 684.8 M1585.4 686.6 L1584.2 684.8" stroke="#0ec0d8" stroke-width="1.4" stroke-linecap="round"/><path d="M1621 668.9 V687.1 M1618 672.6 H1612.6 V683.4 H1618 M1624 672.6 H1629.6 V683.4 H1624" stroke="#0d0f14" stroke-width="1.9" stroke-linecap="round" stroke-linejoin="round" fill="none"/><circle cx="1661" cy="678" r="8.6" stroke="#0d0f14" stroke-width="1.8" stroke-linecap="round" stroke-linejoin="round" fill="none"/><path d="M1657 678 H1665" stroke="#0d0f14" stroke-width="1.8" stroke-linecap="round" stroke-linejoin="round" fill="none"/><rect x="1682.4" y="676.6" width="94.6" height="3" rx="1.5" fill="#cfd4da"/><circle cx="1683.6" cy="678.1" r="1.6" fill="#8a939e"/><circle cx="1797.2" cy="678" r="8.6" stroke="#0d0f14" stroke-width="1.8" stroke-linecap="round" stroke-linejoin="round" fill="none"/><path d="M1793.2 678 H1801.2 M1797.2 674 V682" stroke="#0d0f14" stroke-width="1.8" stroke-linecap="round" stroke-linejoin="round" fill="none"/><rect x="1824.2" y="672.7" width="1" height="11.3" fill="#dde0e4"/><path d="M1844.8 675 V672.2 Q1844.8 670.8 1846.2 670.8 H1849 M1856 670.8 H1858.8 Q1860.2 670.8 1860.2 672.2 V675 M1860.2 682 V684.8 Q1860.2 686.2 1858.8 686.2 H1856 M1849 686.2 H1846.2 Q1844.8 686.2 1844.8 684.8 V682" stroke="#0d0f14" stroke-width="1.9" stroke-linecap="round" stroke-linejoin="round" fill="none"/><rect x="1881" y="670.5" width="14.6" height="10.2" rx="1.6" stroke="#0d0f14" stroke-width="1.8" stroke-linecap="round" stroke-linejoin="round" fill="none"/><path d="M1885.6 684 L1888.3 686.4 L1891 684" stroke="#0d0f14" stroke-width="1.6" stroke-linecap="round" stroke-linejoin="round" fill="none"/><path d="M420.4 814.3 H423.1 L427.6 810.6 V823.4 L423.1 819.7 H420.4 Z" stroke="#0d0f14" stroke-width="1.6" stroke-linecap="round" stroke-linejoin="round" fill="none"/><path d="M430.6 814 Q432.2 817 430.6 820 M433.2 812.2 Q436 817 433.2 821.8" stroke="#0d0f14" stroke-width="1.5" stroke-linecap="round" stroke-linejoin="round" fill="none"/><path d="M483.2 823.4 L483.5 820 L490.4 813.1 Q491.6 812 492.8 813.1 Q494 814.3 492.8 815.5 L485.9 822.4 Z M489.6 823.6 H495.8" stroke="#0d0f14" stroke-width="1.6" stroke-linecap="round" stroke-linejoin="round" fill="none"/><path d="M519.4 708.5 Q519.4 706.8 521.2 706.8 H528.6 Q530.3 706.8 530.3 708.5 V719.2 L524.9 723.8 L519.4 719.2 Z" fill="#eef1f4" stroke="#000" stroke-width="2" stroke-linejoin="round"/><path d="M529.5 811.5 V825" stroke="#0ec4dc" stroke-width="3" stroke-linecap="round"/><rect x="528.2" y="812.3" width="1.2" height="12" fill="#222"/><path d="M983.8 811 V825" stroke="#0ec4dc" stroke-width="3" stroke-linecap="round"/><path d="M551.5 813.9 A5.8 5.8 0 1 1 546.5 811" stroke="#fff" stroke-width="2" fill="none" stroke-linecap="round"/></svg><div style="position:absolute;left:677px;top:96.5px;width:15px;height:15px;border-radius:50%;background:#fff;border:1.3px solid #5d6b75;box-shadow:0 1px 3px rgba(0,0,0,.25)"></div><div style="position:absolute;left:677px;top:599.5px;width:15px;height:15px;border-radius:50%;background:#fff;border:1.3px solid #5d6b75;box-shadow:0 1px 3px rgba(0,0,0,.25)"></div>
</body></html>
